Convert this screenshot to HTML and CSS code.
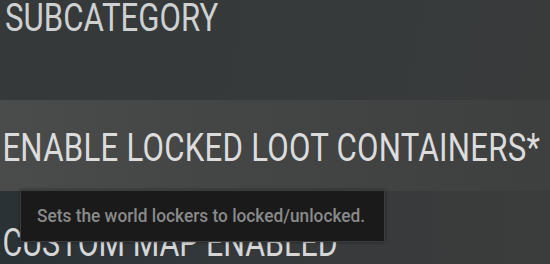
FILE: index.html
```html
<!DOCTYPE html>
<html>
<head>
<meta charset="utf-8">
<link rel="stylesheet" href="styles.css">
</head>
<body>
<div class="screen">
  <div class="subcat"><span class="cond">SUBCATEGORY</span></div>
  <div class="row row-active">
    <span class="label cond">ENABLE LOCKED LOOT CONTAINERS*</span>
  </div>
  <div class="row row-next">
    <span class="label cond">CUSTOM MAP ENABLED</span>
  </div>
  <div class="tooltip"><span class="tip-text">Sets the world lockers to locked/unlocked.</span></div>
</div>
</body>
</html>
```
FILE: styles.css
```css
html, body {
  margin: 0;
  padding: 0;
  width: 550px;
  height: 264px;
  overflow: hidden;
  background: #363a3b;
}
.screen {
  position: relative;
  width: 550px;
  height: 264px;
  display: flex;
  flex-direction: column;
  font-family: Roboto, "DejaVu Sans Condensed", sans-serif;
  background: linear-gradient(100deg, #35393a 0%, #373a3b 60%, #393b3b 100%);
}
.cond {
  display: inline-block;
  transform: scaleX(0.8);
  transform-origin: 0 50%;
  white-space: nowrap;
}
.subcat {
  height: 101px;
  box-sizing: border-box;
  padding: 0 0 0 5px;
  font-size: 39px;
  line-height: 39px;
  color: #cfd0d0;
  margin-top: -1px;
}
.row {
  display: flex;
  align-items: center;
  box-sizing: border-box;
}
.label {
  font-size: 38px;
  line-height: 38px;
  color: #dcdcdc;
  padding-left: 3px;
}
.row-active {
  height: 91px;
  padding-top: 4px;
  background: linear-gradient(90deg, #4a4b4b 0%, #444545 40%, #3e3f3f 100%);
}
.row-active .label {
  font-size: 39px;
  letter-spacing: 0.3px;
}
.row-next {
  flex: 1;
  align-items: flex-start;
  padding-top: 33px;
  background: linear-gradient(90deg, #2b3236 0%, #30363a 30%, #383a3b 60%, #3b3c3c 100%);
}
.row-next .label {
  color: #d6d6d6;
}
.tooltip {
  position: absolute;
  left: 20px;
  top: 190px;
  width: 365px;
  height: 52px;
  box-sizing: border-box;
  background: #1a1a1a;
  border: 1px solid #3c3c3c;
  box-shadow: 0 0 3px rgba(0,0,0,0.5);
  color: #8a8a8a;
  font-size: 19px;
  font-weight: 500;
  line-height: 19px;
  padding: 15px 0 0 16px;
}
.tip-text {
  display: inline-block;
  transform: scaleX(0.91);
  transform-origin: 0 50%;
  white-space: nowrap;
}
```
